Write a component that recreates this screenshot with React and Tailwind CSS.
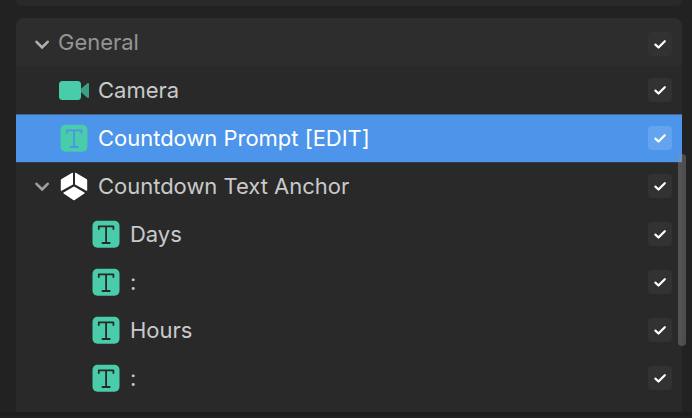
import React from "react";

function Chevron({ className }) {
  return (
    <svg className={className} width="16" height="12" viewBox="0 0 16 12" fill="none">
      <path d="M2.5 2.8 8.1 8.5l5.6-5.7" stroke="currentColor" strokeWidth="2.6" strokeLinecap="round" />
    </svg>
  );
}

function TextIcon() {
  return (
    <svg width="28" height="28" viewBox="0 0 28 28" fill="none">
      <rect x="0.5" y="0.8" width="27" height="27" rx="5" fill="#48cca9" />
      <path d="M6.8 9V6.3h14.6V9M14.1 6.3v16.6M10.5 23h7.2" stroke="currentColor" strokeWidth="1.8" strokeLinecap="round" strokeLinejoin="round" />
    </svg>
  );
}

function CameraIcon() {
  return (
    <svg width="32" height="28" viewBox="0 0 32 28">
      <path d="M21.8 13 28 7.6q2-1.3 2 .8v12.2q0 2.1-2 .8L21.8 16Z" fill="#3d9f86" />
      <rect x="0" y="5" width="22" height="19" rx="3.5" fill="#48cca9" />
    </svg>
  );
}

function AnchorIcon() {
  return (
    <svg width="28" height="30" viewBox="0 0 28 30" fill="#fff">
      <path d="M13 2q0-.6-.8-.2L1.6 7.9q-.8.5-.8 1.3v10q0 1 .8.5L13 13.4ZM15 2q0-.6.8-.2l10.6 6.1q.8.5.8 1.3v10q0 1-.8.5L15 13.4ZM14.6 15.8q-.6-.3-1.2 0L3.6 21.5q-.8.6 0 1.1l9.7 6.4q.7.4 1.4 0l9.7-6.4q.8-.5 0-1.1Z" />
    </svg>
  );
}

function Check({ selected, className = "" }) {
  return (
    <span className={`mr-2.5 ml-auto flex size-6 shrink-0 items-center justify-center rounded ${selected ? "bg-[#64a3ee]" : "bg-[#323232]"} ${className}`}>
      <svg width="14" height="12" viewBox="0 0 14 12" fill="none">
        <path d="M2.4 6.6 5.5 9.5 11.8 3.2" stroke="#fff" strokeWidth="2.2" strokeLinecap="round" strokeLinejoin="round" />
      </svg>
    </span>
  );
}

const rows = [
  { label: "Camera", kind: "camera" },
  { label: "Countdown Prompt [EDIT]", kind: "text", selected: true },
  { label: "Countdown Text Anchor", kind: "anchor" },
  { label: "Days", kind: "text", nested: true },
  { label: ":", kind: "text", nested: true },
  { label: "Hours", kind: "text", nested: true },
  { label: ":", kind: "text", nested: true },
];

function Row({ label, kind, selected, nested }) {
  return (
    <div className={`flex h-12 items-center ${selected ? "bg-[#4c95eb] text-white shadow-[inset_0_1px_0_#44658f,0_1px_0_#303a48]" : "text-[#c9c9c9]"}`}>
      <span className={`flex shrink-0 justify-center ${nested ? "w-[75px]" : "w-[43px]"}`}>
        {kind === "anchor" && <Chevron className="mt-0.5 mr-[9px] ml-auto text-[#a0a0a0]" />}
      </span>
      <span className={`flex w-[39px] shrink-0 ${kind === "camera" ? "" : "pl-px"} ${selected ? "text-[#4c95eb]" : "text-[#292929]"}`}>
        {kind === "camera" && <CameraIcon />}
        {kind === "text" && <TextIcon />}
        {kind === "anchor" && <AnchorIcon />}
      </span>
      <span className="whitespace-nowrap">{label}</span>
      <Check selected={selected} />
    </div>
  );
}

export default function App() {
  return (
    <div className="relative h-[418px] w-[692px] overflow-hidden bg-[#222222] pr-2.5 pl-4 font-['Inter',sans-serif] text-[22px] leading-none font-[430] tracking-[-0.02px]">
      <div className="h-1.5 rounded-b-lg bg-[#292929]" />
      <div className="mt-3 h-[394px] overflow-hidden rounded-t-lg bg-[#292929]">
        <div className="flex h-12 items-center bg-[#2d2d2d] text-[#949494]">
          <Chevron className="mt-1.5 ml-[18px] text-[#b0b0b0]" />
          <span className="ml-2">General</span>
          <Check className="mt-1" />
        </div>
        {rows.map((row, i) => (
          <Row key={i} {...row} />
        ))}
      </div>
      <div className="-mr-2.5 -ml-4 h-1 bg-[#1e1e1e]" />
      <div className="absolute top-[154px] left-[678px] h-48 w-2 rounded-full bg-[#929292]/40" />
    </div>
  );
}
